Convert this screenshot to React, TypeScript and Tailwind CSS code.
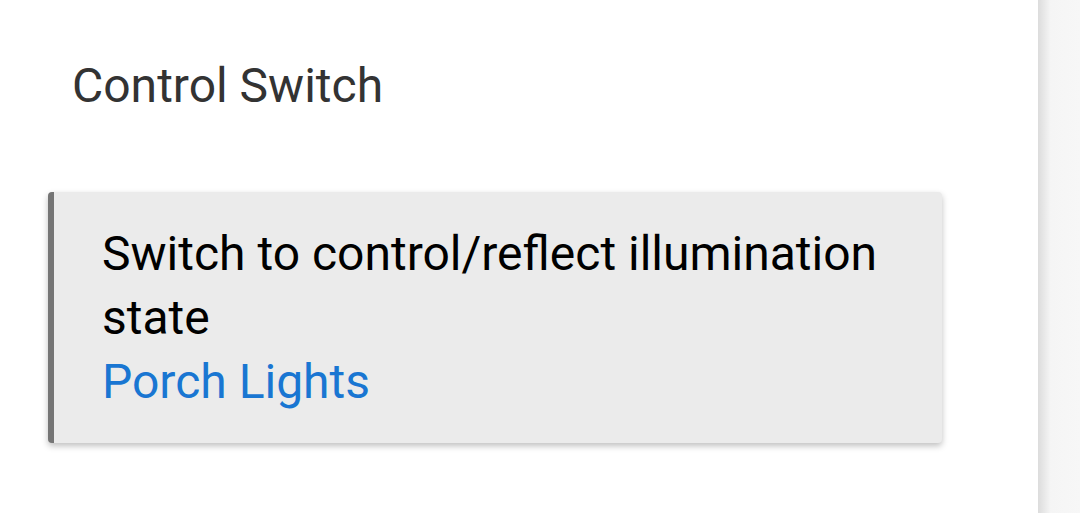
export default function App() {
  return (
    <div className="flex h-[513px] w-[1080px] overflow-hidden bg-white font-['Roboto',sans-serif]">
      <main className="flex-1 pt-[58px]">
        <h1 className="pl-[72px] text-[48px] font-normal leading-[56px] text-[#333333]">Control Switch</h1>
        <div className="ml-[48px] mt-[78px] w-[894px] rounded-[4px] border-l-[6px] border-[#757575] bg-[#ebebeb] pt-[30px] pb-[29px] pl-[48px] pr-[40px] shadow-[0_3px_6px_rgba(0,0,0,0.25)]">
          <p className="text-[48px] leading-[64px] text-black">Switch to control/reflect illumination state</p>
          <p className="text-[48px] leading-[64px] text-[#1976d2]">Porch Lights</p>
        </div>
      </main>
      <div className="w-[42px] bg-gradient-to-r from-[#dcdcdc] via-[#f5f5f5] via-30% to-[#f7f7f7]" />
    </div>
  );
}
